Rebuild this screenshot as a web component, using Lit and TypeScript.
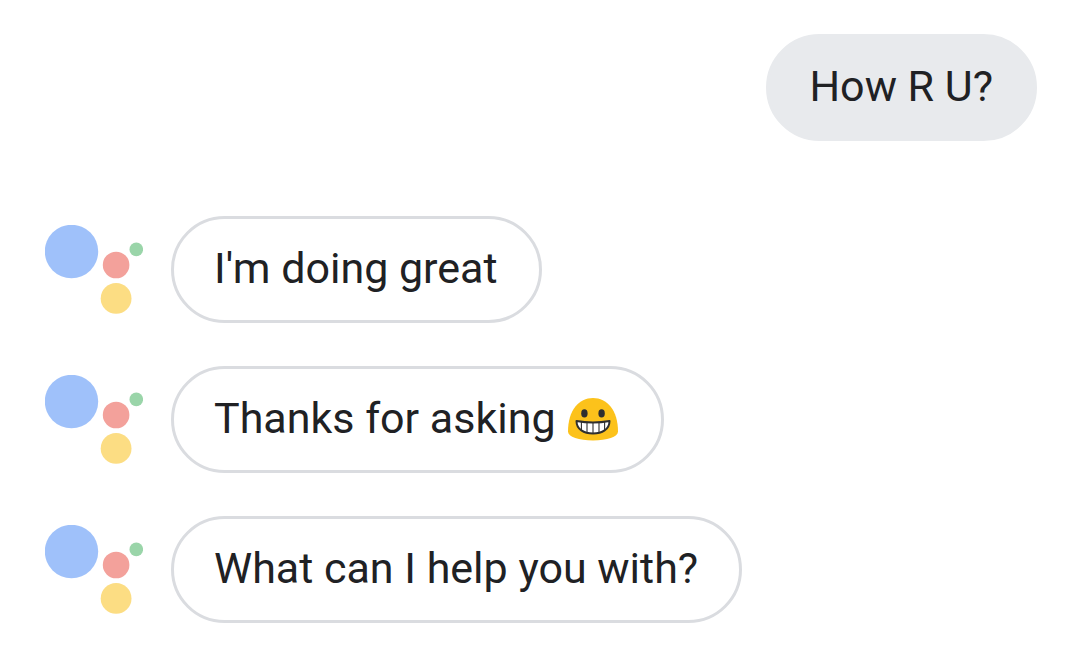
import { LitElement, html, css, svg } from "lit";
import { customElement, property } from "lit/decorators.js";

@customElement("assistant-avatar")
class AssistantAvatar extends LitElement {
  static styles = css`
    :host { display: block; flex: none; width: 98px; height: 90px; }
    svg { display: block; }
  `;
  render() {
    return html`<svg width="98" height="90" viewBox="0 0 98 90" role="img" aria-label="Assistant">
      <circle cx="26.5" cy="26.5" r="26.7" fill="#9fc1fa" />
      <circle cx="71.1" cy="40" r="13.3" fill="#f3a19b" />
      <circle cx="91.3" cy="24.4" r="6.8" fill="#9ad5a9" />
      <circle cx="71.1" cy="73.4" r="15.4" fill="#fcdd83" />
    </svg>`;
  }
}

@customElement("grin-emoji")
class GrinEmoji extends LitElement {
  static styles = css`
    :host { display: inline-block; vertical-align: top; width: 54px; height: 54px; }
    svg { display: block; }
  `;
  render() {
    const mouth = "M10.5 29Q27 32 43.500 29C43.500 37.500 36 41.500 27 41.500S10.500 37.500 10.500 29Z";
    const teeth = [15.4, 21, 27, 33, 38.6].map(
      (x) => svg`<path d="M${x} 29V42" stroke="#2f2f2f" stroke-width="1.1" />`
    );
    return html`<svg width="54" height="54" viewBox="0 -1 54 54" role="img" aria-label="Grinning face">
      <path d="M27 6C41 6 52 18 52 39.500C52 45 41 48.500 27 48.500S2 45 2 39.500C2 18 13 6 27 6Z" fill="#fcc21b" />
      <ellipse cx="18.400" cy="21.400" rx="3.200" ry="4.100" fill="#2f2f2f" />
      <ellipse cx="35.600" cy="21.400" rx="3.200" ry="4.100" fill="#2f2f2f" />
      <clipPath id="mouth"><path d=${mouth} /></clipPath>
      <path d=${mouth} fill="#fff" />
      <g clip-path="url(#mouth)">${teeth}</g>
      <path d=${mouth} fill="none" stroke="#2f2f2f" stroke-width="2" stroke-linejoin="round" />
    </svg>`;
  }
}

interface Message {
  from: "user" | "assistant";
  text: string;
  grin?: boolean;
}

@customElement("chat-message")
class ChatMessage extends LitElement {
  @property({ attribute: false }) message!: Message;
  static styles = css`
    :host { display: block; }
    .row { display: flex; align-items: flex-start; gap: 28px; }
    .row.user { justify-content: flex-end; }
    assistant-avatar { margin-top: 9px; }
    .bubble {
      box-sizing: border-box;
      margin: 0;
      padding: 22px 41px 25px 40px;
      border: 3px solid #dadce0;
      border-radius: 54px;
      color: #202124;
      font: 400 43px/54px Roboto, sans-serif;
    }
    .user .bubble { background: #e8eaed; border-color: #e8eaed; }
  `;
  render() {
    const { from, text, grin } = this.message;
    return html`<div class="row ${from}">
      ${from === "assistant" ? html`<assistant-avatar></assistant-avatar>` : null}
      <p class="bubble">${text}${grin ? html` <grin-emoji></grin-emoji>` : null}</p>
    </div>`;
  }
}

@customElement("app-root")
class AppRoot extends LitElement {
  static styles = css`
    :host { display: block; background: #fff; }
    .chat { padding: 34px 43px 40px 45px; }
    .replies { display: flex; flex-direction: column; gap: 43px; margin-top: 75px; }
  `;
  private replies: Message[] = [
    { from: "assistant", text: "I'm doing great" },
    { from: "assistant", text: "Thanks for asking", grin: true },
    { from: "assistant", text: "What can I help you with?" },
  ];
  render() {
    return html`<main class="chat">
      <chat-message .message=${{ from: "user", text: "How R U?" }}></chat-message>
      <div class="replies">
        ${this.replies.map((m) => html`<chat-message .message=${m}></chat-message>`)}
      </div>
    </main>`;
  }
}
